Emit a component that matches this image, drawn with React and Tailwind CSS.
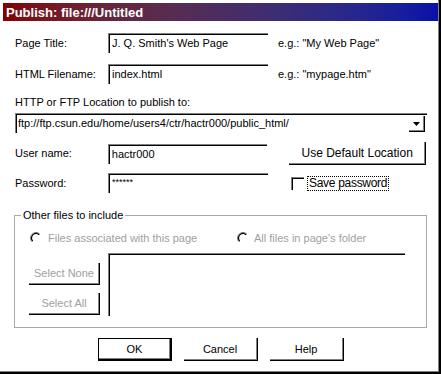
import React from "react";

const sunken = "bg-white border-t border-l border-[#808080] shadow-[inset_1px_1px_0_#000]";

const Field = ({ className, children }) => (
  <div className={`${sunken} flex items-center pl-[3px] whitespace-nowrap overflow-hidden ${className}`}>
    {children}
  </div>
);

const Button = ({ className, children, disabled, isDefault }) => (
  <button
    className={`bg-white flex items-center justify-center leading-none ${
      isDefault
        ? "border border-black shadow-[inset_-1px_-1px_0_#000,inset_-2px_-2px_0_#808080]"
        : "border-r border-b border-black shadow-[inset_-1px_-1px_0_#808080]"
    } ${disabled ? "text-[#a0a0a0]" : "text-black"} ${className}`}
  >
    {children}
  </button>
);

const Radio = () => (
  <svg width="12" height="12" viewBox="0 0 12 12" className="shrink-0">
    <path d="M9.9 2.1 A5.5 5.5 0 0 0 2.1 9.9" stroke="#808080" strokeWidth="1" fill="none" />
    <path d="M9.2 2.8 A4.5 4.5 0 0 0 2.8 9.2" stroke="#000" strokeWidth="1.2" fill="none" />
  </svg>
);

export default function App() {
  return (
    <div className="w-[441px] h-[374px] bg-white border-r-2 border-b-2 border-black font-['Liberation_Sans',Arial,sans-serif] text-[11px] text-black">
      <div className="h-full flex flex-col border-r border-b border-[#808080] pt-[3px] pl-[3px]">
        {/* title bar */}
        <div className="h-[18px] shrink-0 flex items-center pl-[3px] bg-gradient-to-r from-[#800000] to-[#0810a8] text-white font-bold text-[13px] leading-none">
          Publish: file:///Untitled
        </div>

        <div className="flex flex-col px-[12px] pt-[12px]">
          <div className="flex items-center h-[20px]">
            <span className="w-[93px]">Page Title:</span>
            <Field className="w-[160px] h-[20px]">J. Q. Smith's Web Page</Field>
            <span className="ml-[10px]">e.g.: "My Web Page"</span>
          </div>

          <div className="flex items-center h-[20px] mt-[11px]">
            <span className="w-[93px]">HTML Filename:</span>
            <Field className="w-[160px] h-[20px]">index.html</Field>
            <span className="ml-[10px]">e.g.: "mypage.htm"</span>
          </div>

          <div className="mt-[12px] leading-[13px]">HTTP or FTP Location to publish to:</div>

          <div className={`${sunken} mt-[4px] w-[412px] h-[20px] flex items-center justify-between pl-[2px]`}>
            <span className="whitespace-nowrap">ftp://ftp.csun.edu/home/users4/ctr/hactr000/public_html/</span>
            <div className="w-[16px] h-[16px] mr-[2px] mt-[1px] border-r border-b border-black shadow-[inset_-1px_-1px_0_#808080] flex items-center justify-center">
              <svg width="7" height="4" viewBox="0 0 7 4">
                <path d="M0 0 H7 L3.5 4 Z" fill="#000" />
              </svg>
            </div>
          </div>

          <div className="flex items-center h-[23px] mt-[9px]">
            <span className="w-[93px]">User name:</span>
            <Field className="w-[160px] h-[20px]">hactr000</Field>
            <Button className="ml-[22px] w-[137px] h-[23px] text-[12px]">Use Default Location</Button>
          </div>

          <div className="flex items-center h-[20px] mt-[8px]">
            <span className="w-[93px]">Password:</span>
            <Field className="w-[160px] h-[20px] items-start pt-[2px] text-[9px]">******</Field>
            <div className={`${sunken} ml-[23px] w-[13px] h-[13px]`} />
            <span className="ml-[3px] px-[1px] border border-dotted border-black leading-[13px] text-[12px] tracking-[-0.3px]">
              Save password
            </span>
          </div>

          {/* group box */}
          <div className="relative mt-[22px] -ml-[1px] w-[413px] h-[113px] border border-[#a8a8a8] pt-[16px] pl-[15px]">
            <span className="absolute left-[6px] -top-[7px] bg-white px-[2px] leading-[13px]">
              Other files to include
            </span>
            <div className="flex items-center h-[12px] text-[#a0a0a0]">
              <div className="w-[207px] flex items-center">
                <Radio />
                <span className="ml-[6px]">Files associated with this page</span>
              </div>
              <div className="flex items-center">
                <Radio />
                <span className="ml-[5px]">All files in page's folder</span>
              </div>
            </div>
            <div className="flex mt-[9px]">
              <div className="-ml-[1px] w-[79px] pt-[10px] flex flex-col gap-[8px]">
                <Button disabled className="w-[71px] h-[22px]">Select None</Button>
                <Button disabled className="w-[71px] h-[22px]">Select All</Button>
              </div>
              <div className={`${sunken} w-[297px] h-[63px]`} />
            </div>
          </div>

          <div className="flex justify-center gap-[12px] mt-[10px]">
            <Button isDefault className="w-[74px] h-[23px]">OK</Button>
            <Button className="w-[74px] h-[23px]">Cancel</Button>
            <Button className="w-[74px] h-[23px]">Help</Button>
          </div>
        </div>
      </div>
    </div>
  );
}
